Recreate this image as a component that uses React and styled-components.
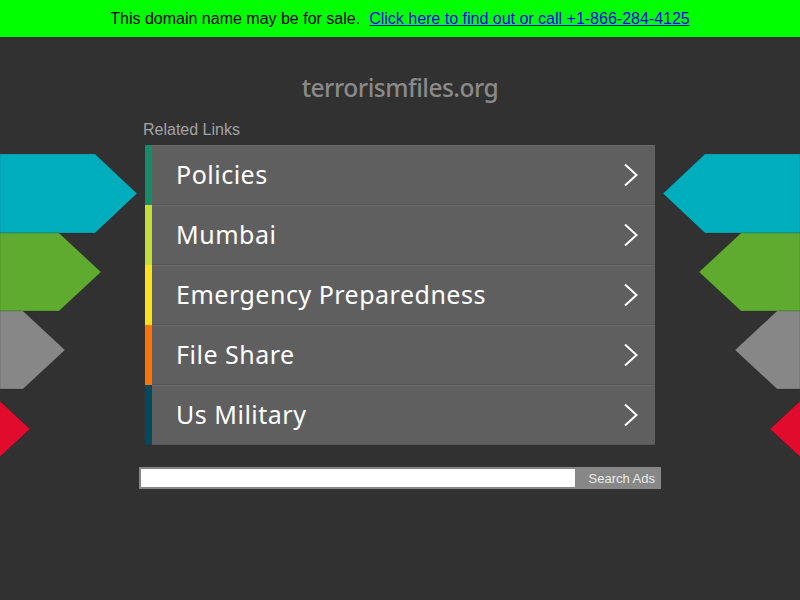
import React from 'react';
import styled, { createGlobalStyle } from 'styled-components';

const GlobalStyle = createGlobalStyle`
    html, body {
        margin: 0;
        padding: 0;
        background: #313131;
    }
    body {
        font-family: 'Liberation Sans', Arial, sans-serif;
    }
`;

const links = [
    { title: 'Policies', color: '#1b8a6b' },
    { title: 'Mumbai', color: '#c5de35' },
    { title: 'Emergency Preparedness', color: '#fde119' },
    { title: 'File Share', color: '#ff7200' },
    { title: 'Us Military', color: '#05485c' },
];

const SaleBar = styled.div`
    height: 37px;
    background: #00ff00;
    display: flex;
    align-items: center;
    justify-content: center;
    font-size: 16px;
    color: #000;
    a {
        color: #0000ee;
        margin-left: 9px;
    }
`;

const Main = styled.div`
    display: grid;
    grid-template-columns: 1fr 522px 1fr;
    height: 563px;
`;

const Side = styled.svg`
    display: block;
    margin-top: 117px;
    justify-self: ${(props) => (props.$right ? 'end' : 'start')};
`;

const Center = styled.div`
    display: flex;
    flex-direction: column;
`;

const Domain = styled.h1`
    margin: 34px 0 0;
    height: 33px;
    text-align: center;
    font-family: 'Noto Sans', sans-serif;
    font-weight: 500;
    font-size: 24.5px;
    line-height: 33px;
    letter-spacing: -0.5px;
    color: #8a8a8a;
`;

const RelatedTitle = styled.div`
    margin: 17px 0 0 4px;
    font-size: 16px;
    line-height: 18px;
    color: #a3a3a3;
`;

const LinkList = styled.ul`
    list-style: none;
    margin: 6px 6px 0;
    padding: 0;
    width: 510px;
`;

const LinkRow = styled.li`
    display: flex;
    height: 60px;
    background: #5f5f5f;
    border-left: 7px solid ${(props) => props.$color};
    box-sizing: border-box;
`;

const LinkBody = styled.a`
    flex: 1;
    display: flex;
    align-items: center;
    justify-content: space-between;
    padding: 0 16px 3px 24px;
    border-top: 1px solid #6a6a6a;
    border-bottom: 1px solid #555;
    font-family: 'Noto Sans', sans-serif;
    font-size: 25px;
    letter-spacing: 0.5px;
    color: #fff;
    text-decoration: none;
    svg {
        margin-top: 3px;
    }
`;

const SearchForm = styled.form`
    display: flex;
    margin-top: 22px;
    height: 22px;
    background: #878787;
    padding: 2px;
    box-sizing: border-box;
`;

const SearchInput = styled.input`
    width: 434px;
    height: 18px;
    border: 0;
    margin: 0;
    padding: 0;
    background: #fff;
`;

const SearchButton = styled.button`
    flex: 1;
    border: 0;
    padding: 0 4px 0 0;
    background: transparent;
    color: #eaeaea;
    font-family: 'Liberation Sans', Arial, sans-serif;
    font-size: 13px;
    text-align: right;
`;

const Chevron = () => (
    <svg width="16" height="24" viewBox="0 0 16 24">
        <path d="M2 1.5 L13.5 12 L2 22.5" fill="none" stroke="#fff" strokeWidth="2" />
    </svg>
);

const Arrows = ({ right }) => (
    <Side $right={right} width="139" height="314" viewBox="0 0 139 314">
        <g transform={right ? 'translate(139 0) scale(-1 1)' : undefined} stroke="rgba(0,0,0,0.25)" strokeWidth="0.6">
            <polygon points="0,0 95,0 137,39.5 95,79 0,79" fill="#00adbd" />
            <polygon points="0,79 59,79 101,118 59,157 0,157" fill="#5eab30" />
            <polygon points="0,157 23,157 65,196 23,235 0,235" fill="#878787" />
            <polygon points="-12,236 30,275 -12,314" fill="#e00b2d" />
        </g>
    </Side>
);

const App = () => {
    return (
        <>
            <GlobalStyle />
            <SaleBar>
                This domain name may be for sale.
                <a href="#">Click here to find out or call +1-866-284-4125</a>
            </SaleBar>
            <Main>
                <Arrows />
                <Center>
                    <Domain>terrorismfiles.org</Domain>
                    <RelatedTitle>Related Links</RelatedTitle>
                    <LinkList>
                        {links.map((link) => (
                            <LinkRow key={link.title} $color={link.color}>
                                <LinkBody href="#">
                                    {link.title}
                                    <Chevron />
                                </LinkBody>
                            </LinkRow>
                        ))}
                    </LinkList>
                    <SearchForm onSubmit={(e) => e.preventDefault()}>
                        <SearchInput type="text" />
                        <SearchButton type="submit">Search Ads</SearchButton>
                    </SearchForm>
                </Center>
                <Arrows right />
            </Main>
        </>
    );
};

export default App;
